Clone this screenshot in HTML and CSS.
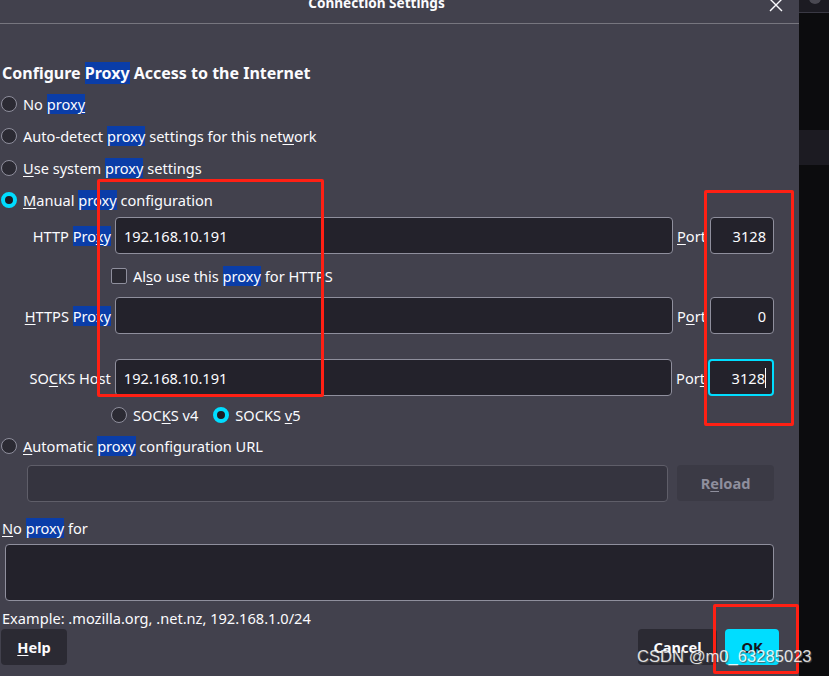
FILE: index.html
```html
<!DOCTYPE html>
<html lang="en">
<head>
<meta charset="utf-8">
<title>Connection Settings</title>
<link rel="stylesheet" href="styles.css">
</head>
<body>
<div class="screen">
  <div class="dialog">
    <div class="titlebar">
      <span class="title">Connection Settings</span>
      <span class="close">
        <svg width="14" height="14" viewBox="0 0 14 14"><path d="M1 1 L13 13 M13 1 L1 13" stroke="#fbfbfe" stroke-width="1.4" fill="none"/></svg>
      </span>
    </div>
    <div class="content">
      <h1 class="heading">Configure <mark>Proxy</mark> Access to the Internet</h1>

      <div class="radio-row"><span class="radio"></span><span>No <mark>prox<u>y</u></mark></span></div>
      <div class="radio-row"><span class="radio"></span><span>Auto-detect <mark>proxy</mark> settings for this net<u>w</u>ork</span></div>
      <div class="radio-row"><span class="radio"></span><span><u>U</u>se system <mark>proxy</mark> settings</span></div>
      <div class="radio-row"><span class="radio checked"></span><span><u>M</u>anual <mark>proxy</mark> configuration</span></div>

      <div class="field-row first">
        <label class="field-label">HTTP <mark>Pro<u>x</u>y</mark></label>
        <div class="input host">192.168.10.191</div>
        <label class="port-label"><u>P</u>ort</label>
        <div class="input port">3128</div>
      </div>
      <div class="check-row"><span class="checkbox"></span><span>Al<u>s</u>o use this <mark>proxy</mark> for HTTPS</span></div>
      <div class="field-row second">
        <label class="field-label"><u>H</u>TTPS <mark>Proxy</mark></label>
        <div class="input host"></div>
        <label class="port-label">P<u>o</u>rt</label>
        <div class="input port">0</div>
      </div>
      <div class="field-row third">
        <label class="field-label">SO<u>C</u>KS Host</label>
        <div class="input host">192.168.10.191</div>
        <label class="port-label">Por<u>t</u></label>
        <div class="input port focused">3128<span class="caret"></span></div>
      </div>
      <div class="socks-row">
        <span class="radio"></span><span class="socks-label">SOC<u>K</u>S v4</span>
        <span class="radio checked"></span><span>SOCKS <u>v</u>5</span>
      </div>

      <div class="radio-row auto"><span class="radio"></span><span><u>A</u>utomatic <mark>proxy</mark> configuration URL</span></div>
      <div class="url-row">
        <div class="input url disabled"></div>
        <div class="btn reload">R<u>e</u>load</div>
      </div>

      <div class="noproxy-label"><u>N</u>o <mark>proxy</mark> for</div>
      <div class="textarea"></div>
      <div class="example">Example: .mozilla.org, .net.nz, 192.168.1.0/24</div>

      <div class="buttons">
        <div class="btn help"><u>H</u>elp</div>
        <div class="spacer"></div>
        <div class="btn cancel">Cancel</div>
        <div class="btn ok">OK</div>
      </div>
    </div>
  </div>
  <div class="side">
    <div class="side-top"><span class="side-dot"></span></div>
    <div class="side-band"></div>
  </div>

  <div class="annot box-a"></div>
  <div class="annot box-b"></div>
  <div class="annot box-c"></div>
  <div class="watermark">CSDN @m0_63285023</div>
</div>
</body>
</html>
```

FILE: styles.css
```css
* { box-sizing: border-box; }
html, body { margin: 0; padding: 0; }
body {
  background: #0c0c0e;
  font-family: "Noto Sans", "Open Sans", sans-serif;
  font-size: 14.6px;
  color: #fbfbfe;
}
.screen {
  position: relative;
  width: 829px;
  height: 676px;
  overflow: hidden;
  display: flex;
}
.dialog {
  width: 799px;
  height: 676px;
  background: #42414d;
  display: flex;
  flex-direction: column;
}
.titlebar {
  height: 24px;
  border-bottom: 1px solid #77767f;
  display: flex;
  justify-content: center;
  position: relative;
}
.title {
  font-weight: bold;
  font-size: 13.6px;
  line-height: 20px;
  margin-top: -7px;
  margin-right: 46px;
}
.close {
  position: absolute;
  right: 16px;
  top: -4px;
}
.content {
  padding: 0 25px 0 1px;
  display: flex;
  flex-direction: column;
}
mark {
  background: #0a3da8;
  color: #fbfbfe;
}
u { text-decoration-thickness: 1px; text-underline-offset: 2px; }
.heading {
  margin: 38px 0 0 1px;
  font-size: 16px;
  font-weight: bold;
  line-height: 22px;
}
.radio-row {
  height: 32px;
  display: flex;
  align-items: center;
  line-height: 20px;
}
.heading + .radio-row { margin-top: 4px; }
.radio {
  width: 16px;
  height: 16px;
  border-radius: 50%;
  border: 1px solid #8f8f9d;
  background: #2b2a33;
  margin-right: 6px;
  flex: none;
}
.radio.checked {
  border: 4px solid #00ddff;
  background: #1c1b22;
}
.field-row {
  display: flex;
  align-items: center;
  height: 37px;
  gap: 4px;
}
.field-row.first { margin-top: 1px; }
.field-row.second { margin-top: 0; }
.field-row.third { margin-top: 25px; }
.field-label {
  width: 110px;
  text-align: right;
  white-space: nowrap;
}
.input {
  height: 37px;
  background: #23222b;
  border: 1px solid #8f8f9d;
  border-radius: 4px;
  display: flex;
  align-items: center;
  padding: 0 8px;
}
.input.host { width: 558px; }
.port-label { width: 29px; white-space: nowrap; }
.input.port {
  width: 64px;
  justify-content: flex-end;
  padding-right: 7px;
}
.input.focused {
  border: 2px solid #00ddff;
  padding-right: 6px;
  width: 66px;
  margin-left: -1px;
}
.caret {
  width: 1px;
  height: 20px;
  background: #fbfbfe;
}
.check-row {
  margin: 13px 0 12px 110px;
  height: 18px;
  display: flex;
  align-items: center;
}
.checkbox {
  width: 16px;
  height: 16px;
  border: 1px solid #8f8f9d;
  border-radius: 2px;
  background: #2b2a33;
  margin-right: 6px;
}
.socks-row {
  margin: 9px 0 0 110px;
  height: 20px;
  display: flex;
  align-items: center;
}
.socks-label { margin-right: 15px; }
.radio-row.auto { margin-top: 5px; }
.url-row {
  margin: 3px 0 0 26px;
  display: flex;
  gap: 9px;
}
.input.url {
  width: 642px;
  background: #35343f;
  border-color: #5f5e69;
}
.btn {
  height: 36px;
  border-radius: 4px;
  display: flex;
  align-items: center;
  justify-content: center;
  font-weight: bold;
  font-size: 14.6px;
}
.reload {
  width: 97px;
  background: #3b3a45;
  color: #8f8f9d;
}
.noproxy-label {
  margin: 16px 0 0 1px;
  line-height: 20px;
}
.textarea {
  margin: 6px 0 0 4px;
  height: 57px;
  background: #23222b;
  border: 1px solid #8f8f9d;
  border-radius: 4px;
}
.example {
  margin: 7px 0 0 1px;
  line-height: 20px;
}
.buttons {
  margin-top: 1px;
  display: flex;
  align-items: center;
}
.spacer { flex: 1; }
.help { width: 66px; background: #2b2a33; }
.cancel { width: 79px; background: #2b2a33; margin-right: 8px; }
.ok { width: 54px; background: #00ddff; color: #15141a; margin-right: -5px; }
.side {
  width: 30px;
  background: #0c0c0e;
  display: flex;
  flex-direction: column;
}
.side-top {
  height: 13px;
  border-bottom: 1px solid #3a3944;
  background: #1c1b22;
  position: relative;
}
.side-dot {
  position: absolute;
  left: 10px;
  top: -8px;
  width: 12px;
  height: 12px;
  border-radius: 50%;
  background: #4a4952;
}
.side-band {
  margin-top: 117px;
  height: 35px;
  background: #1c1b22;
}
.annot {
  position: absolute;
  border: 3px solid #ff2014;
  border-radius: 2px;
}
.box-a { left: 97px; top: 179px; width: 227px; height: 218px; }
.box-b { left: 704px; top: 190px; width: 90px; height: 236px; }
.box-c { left: 713px; top: 604px; width: 86px; height: 70px; }
.watermark {
  position: absolute;
  left: 637px;
  top: 647px;
  font-family: "Liberation Sans", Arial, sans-serif;
  font-size: 16.6px;
  color: #ffffff;
  opacity: 0.85;
  text-shadow: 1px 1px 1px #555;
  white-space: nowrap;
}
```
